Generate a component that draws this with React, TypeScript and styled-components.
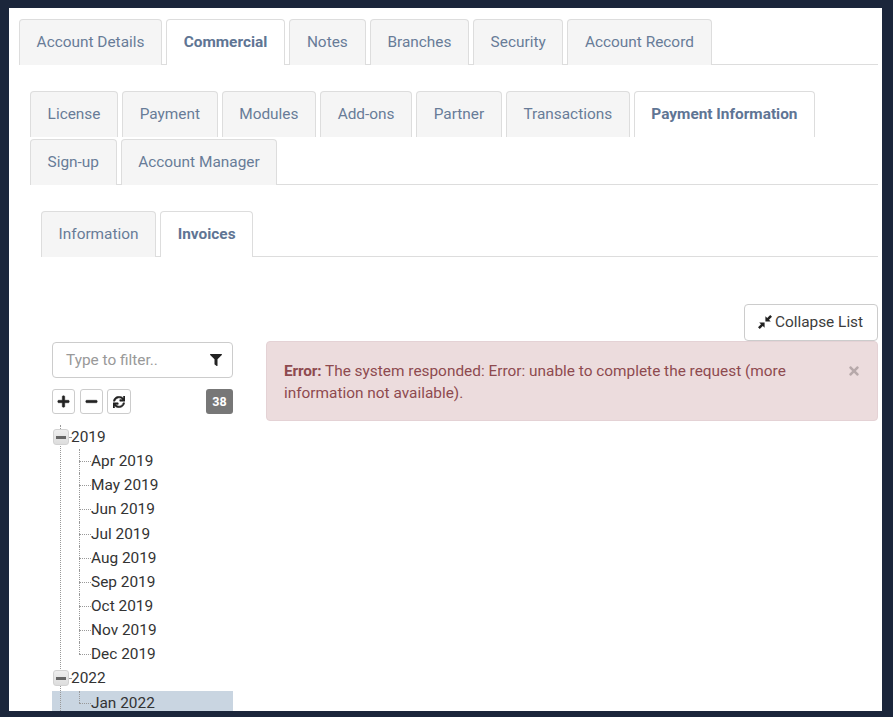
import React from "react";
import styled, { createGlobalStyle } from "styled-components";
import { FaFilter, FaPlus, FaMinus, FaSync, FaTimes } from "react-icons/fa";

const GlobalStyle = createGlobalStyle`
  html, body {
    margin: 0;
    padding: 0;
    height: 100%;
    overflow: hidden;
    background: #1b263b;
  }
  * { box-sizing: border-box; }
`;

const Page = styled.div`
  padding: 8px 11px 6px 9px;
  height: 717px;
  font-family: Roboto, "Liberation Sans", sans-serif;
`;

const Panel = styled.div`
  background: #fff;
  height: 703px;
  overflow: hidden;
  padding: 11px 4px 0 10px;
`;

const TabBar = styled.div<{ $inset?: number }>`
  display: flex;
  flex-wrap: wrap;
  column-gap: 4px;
  row-gap: 3px;
  margin-left: ${(p) => p.$inset ?? 0}px;
  border-bottom: 1px solid #ddd;
`;

const Tab = styled.div<{ $active?: boolean; $extra?: number }>`
  height: 46px;
  margin-bottom: -1px;
  padding: 0 ${(p) => 16.6 + (p.$extra ?? 0)}px 2px;
  display: flex;
  align-items: center;
  font-size: 15.4px;
  font-weight: ${(p) => (p.$active ? 700 : 400)};
  color: ${(p) => (p.$active ? "#5f7594" : "#687c98")};
  background: ${(p) => (p.$active ? "#fff" : "#f5f5f5")};
  border: 1px solid #ddd;
  border-bottom: none;
  border-radius: 4px 4px 0 0;
`;

const Nested = styled.div<{ $top: number }>`
  margin-top: ${(p) => p.$top}px;
`;

const CollapseRow = styled.div`
  display: flex;
  justify-content: flex-end;
  margin-top: 47px;
`;

const CollapseButton = styled.button`
  height: 37px;
  width: 134px;
  display: flex;
  align-items: center;
  justify-content: center;
  gap: 3px;
  padding: 0 1px 2px 0;
  font-family: inherit;
  font-size: 15.4px;
  color: #3c3c3c;
  background: #fff;
  border: 1px solid #ccc;
  border-radius: 4px;
`;

const Columns = styled.div`
  display: flex;
  align-items: flex-start;
`;

const Sidebar = styled.div`
  width: 181px;
  margin-left: 33px;
  margin-right: 33px;
  padding-top: 1px;
  flex-shrink: 0;
`;

const FilterBox = styled.div`
  height: 36px;
  display: flex;
  align-items: center;
  justify-content: space-between;
  padding: 0 10px 0 13px;
  border: 1px solid #ccc;
  border-radius: 4px;
  font-size: 15.4px;
  color: #999;
  svg { color: #222; font-size: 12px; }
`;

const ToolRow = styled.div`
  display: flex;
  align-items: center;
  gap: 4.5px;
  margin-top: 11px;
`;

const ToolButton = styled.button<{ $w: number; $icon?: number }>`
  width: ${(p) => p.$w}px;
  height: 25px;
  padding: 0;
  display: flex;
  align-items: center;
  justify-content: center;
  background: #fff;
  border: 1px solid #ccc;
  border-radius: 3px;
  color: #222;
  font-size: ${(p) => p.$icon ?? 13}px;
  svg { stroke: #222; stroke-width: 20px; }
`;

const Badge = styled.span`
  margin-left: auto;
  width: 27px;
  height: 25px;
  display: flex;
  align-items: center;
  justify-content: center;
  background: #777;
  color: #fff;
  font-size: 12.5px;
  font-weight: 700;
  border-radius: 3px;
`;

const Tree = styled.div`
  margin-top: 11px;
  position: relative;
`;

const Spine = styled.span<{ $top: number; $h: number }>`
  position: absolute;
  left: 8px;
  top: ${(p) => p.$top}px;
  height: ${(p) => p.$h}px;
  border-left: 1px dotted #999;
  z-index: 1;
`;

const YearRow = styled.div`
  height: 24.15px;
  position: relative;
  display: flex;
  align-items: center;
  padding-left: 19px;
  font-size: 15.4px;
  color: #333;
`;

const Toggle = styled.span`
  position: absolute;
  left: 1px;
  top: 4px;
  width: 16px;
  height: 16px;
  display: flex;
  align-items: center;
  justify-content: center;
  background: linear-gradient(#eee, #ddd);
  border: 1px solid #d2d2d2;
  border-radius: 3px;
  z-index: 2;
  &::after {
    content: "";
    width: 10px;
    height: 3px;
    background: #666;
  }
`;

const YearTick = styled.span`
  position: absolute;
  left: 17px;
  top: 12px;
  width: 2px;
  border-top: 1px dotted #999;
`;

const MonthRow = styled.div<{ $selected?: boolean; $last?: boolean }>`
  height: 24.15px;
  position: relative;
  display: flex;
  align-items: center;
  padding-left: 39px;
  font-size: 15.4px;
  color: #333;
  background: ${(p) => (p.$selected ? "#c9d5e1" : "transparent")};
  &::before {
    content: "";
    position: absolute;
    left: 27px;
    top: 0;
    height: ${(p) => (p.$last ? "12px" : "100%")};
    border-left: 1px dotted #999;
  }
  &::after {
    content: "";
    position: absolute;
    left: 27px;
    top: 12px;
    width: 12px;
    border-top: 1px dotted #999;
  }
`;

const Content = styled.div`
  flex: 1;
`;

const Alert = styled.div`
  height: 80px;
  position: relative;
  padding: 18px 48px 0 17px;
  font-size: 15.4px;
  line-height: 22px;
  color: #8e4a4f;
  background: #ecdcdd;
  border: 1px solid #e4d2d5;
  border-radius: 4px;
`;

const ErrorLabel = styled.strong`
  letter-spacing: -0.15px;
`;

const CloseIcon = styled.span`
  position: absolute;
  right: 16px;
  top: 22px;
  color: #b7a9aa;
  font-size: 14px;
  display: flex;
`;

const level1 = ["Account Details", "Commercial", "Notes", "Branches", "Security", "Account Record"];
const level2 = ["License", "Payment", "Modules", "Add-ons", "Partner", "Transactions", "Payment Information", "Sign-up", "Account Manager"];
const level3 = ["Information", "Invoices"];
const months2019 = ["Apr", "May", "Jun", "Jul", "Aug", "Sep", "Oct", "Nov", "Dec"];

const CollapseIcon = () => (
  <svg width="14" height="14" viewBox="0 0 14 14" fill="#222">
    <path d="M12.2 0L14 1.8l-3 3L12.8 6.6H7.4V1.2l1.8 1.8z" />
    <path d="M6.6 7.4v5.4l-1.8-1.8-3 3L0 12.2l3-3L1.2 7.4z" />
  </svg>
);

const App: React.FC = () => (
  <Page>
    <GlobalStyle />
    <Panel>
      <TabBar>
        {level1.map((t) => (
          <Tab key={t} $active={t === "Commercial"} $extra={t === "Notes" ? 0.4 : 0}>{t}</Tab>
        ))}
      </TabBar>
      <Nested $top={26}>
        <TabBar $inset={11}>
          {level2.map((t) => (
            <Tab key={t} $active={t === "Payment Information"}>{t}</Tab>
          ))}
        </TabBar>
      </Nested>
      <Nested $top={26}>
        <TabBar $inset={22}>
          {level3.map((t) => (
            <Tab key={t} $active={t === "Invoices"}>{t}</Tab>
          ))}
        </TabBar>
      </Nested>
      <CollapseRow>
        <CollapseButton><CollapseIcon /> Collapse List</CollapseButton>
      </CollapseRow>
      <Columns>
        <Sidebar>
          <FilterBox>Type to filter.. <FaFilter /></FilterBox>
          <ToolRow>
            <ToolButton $w={23}><FaPlus /></ToolButton>
            <ToolButton $w={23}><FaMinus /></ToolButton>
            <ToolButton $w={24} $icon={12}><FaSync /></ToolButton>
            <Badge>38</Badge>
          </ToolRow>
          <Tree>
            <Spine $top={0} $h={290} />
            <YearRow><Toggle /><YearTick />2019</YearRow>
            {months2019.map((m, i) => (
              <MonthRow key={m} $last={i === months2019.length - 1}>{m} 2019</MonthRow>
            ))}
            <YearRow><Toggle /><YearTick />2022</YearRow>
            <MonthRow $selected $last>Jan 2022</MonthRow>
          </Tree>
        </Sidebar>
        <Content>
          <Alert>
            <ErrorLabel>Error:</ErrorLabel> The system responded: Error: unable to complete the request (more information not available).
            <CloseIcon><FaTimes /></CloseIcon>
          </Alert>
        </Content>
      </Columns>
    </Panel>
  </Page>
);

export default App;
